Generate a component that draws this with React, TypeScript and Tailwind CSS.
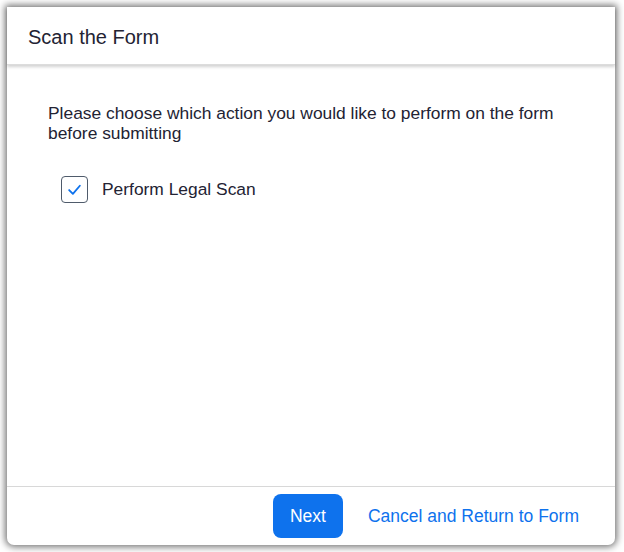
import React from "react";

export default function App() {
  return (
    <div className="w-[624px] h-[552px] bg-white p-[7px]" style={{ fontFamily: '"Liberation Sans", Arial, sans-serif' }}>
      <div className="w-[608px] h-[538px] bg-white rounded-b-[7px] shadow-[0_0_7px_2px_rgba(0,0,0,0.55)] flex flex-col">
        <div className="h-[58px] flex items-center pl-[21px] pt-[3px] shadow-[0_2px_3px_rgba(0,0,0,0.18)] border-b border-[#dcdcdc] relative z-10">
          <span className="text-[20px] text-[#232333]">Scan the Form</span>
        </div>
        <div className="flex-1 pl-[41px] pr-[40px] pt-[38px]">
          <p className="text-[17.4px] leading-[20px] text-[#232333]">
            Please choose which action you would like to perform on the form before submitting
          </p>
          <label className="flex items-center mt-[33px] ml-[13px] gap-[14px]">
            <span className="w-[27px] h-[27px] rounded-[4px] border border-[#4f5b6b] flex items-center justify-center">
              <svg width="15" height="15" viewBox="0 0 14 14" fill="none">
                <path d="M2 7.5 L5.5 11 L12 3.5" stroke="#0e72ed" strokeWidth="1.7" strokeLinecap="round" strokeLinejoin="round" />
              </svg>
            </span>
            <span className="text-[17.4px] text-[#232333]">Perform Legal Scan</span>
          </label>
        </div>
        <div className="h-[59px] border-t border-[#d8d8d8] flex items-center justify-end pr-[36px] gap-[25px]">
          <button className="h-[44px] w-[70px] rounded-[8px] bg-[#0e72ed] text-white text-[17.5px]">Next</button>
          <span className="text-[17.5px] text-[#0e72ed]">Cancel and Return to Form</span>
        </div>
      </div>
    </div>
  );
}
